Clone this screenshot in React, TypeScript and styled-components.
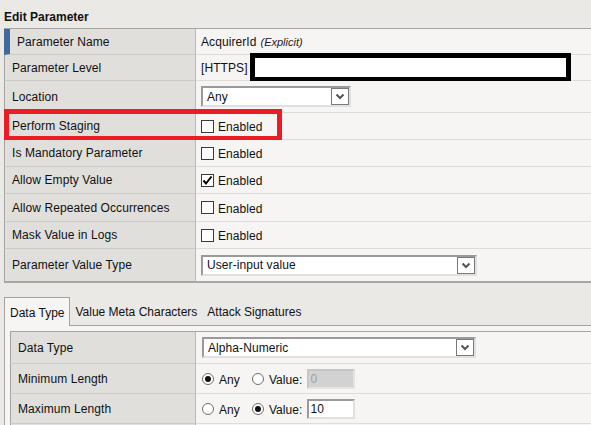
import React from "react";
import styled, { createGlobalStyle } from "styled-components";

const GlobalStyle = createGlobalStyle`
  html, body { margin: 0; padding: 0; }
  body {
    background: #eae9e6;
    font-family: "Liberation Sans", Arial, sans-serif;
    font-size: 12px;
    letter-spacing: 0.08px;
    color: #111;
    overflow: hidden;
  }
  * { box-sizing: border-box; }
`;

const Page = styled.div`
  padding-left: 4px;
  width: 591px;
  height: 425px;
  overflow: hidden;
`;

const Title = styled.h1`
  margin: 0;
  font-size: 12px;
  font-weight: bold;
  height: 28px;
  padding-top: 10px;
  line-height: 14px;
  color: #111;
  letter-spacing: 0;
`;

const Table = styled.div<{ $outer?: boolean }>`
  position: relative;
  border-top: 1px solid #a3a3a3;
  border-bottom: ${(p) => (p.$outer ? "2px solid #a6a6a6" : "none")};
`;

const Row = styled.div<{ $h: number }>`
  position: relative;
  display: flex;
  height: ${(p) => p.$h}px;
`;

const Label = styled.div<{ $w: number; $active?: boolean; $last?: boolean }>`
  width: ${(p) => p.$w}px;
  flex: none;
  display: flex;
  align-items: center;
  background: #e0dfdc;
  border-left: ${(p) => (p.$active ? "6px solid #3e6b9c" : "1px solid #a3a3a3")};
  border-right: 1px solid #b9b8b5;
  border-bottom: ${(p) => (p.$last ? "none" : "1px solid #cbcac7")};
  padding-left: 7px;
  white-space: nowrap;
`;

const Value = styled.div<{ $pad?: number; $last?: boolean }>`
  flex: 1;
  display: flex;
  align-items: center;
  background: #f6f5f3;
  border-bottom: ${(p) => (p.$last ? "none" : "1px solid #dddcd9")};
  padding-left: ${(p) => p.$pad ?? 5}px;
  white-space: nowrap;
`;

const Explicit = styled.i`
  font-size: 11px;
  color: #222;
  margin-left: 4px;
  letter-spacing: 0;
`;

const Redact = styled.div`
  position: absolute;
  top: -2px;
  left: 246px;
  width: 321px;
  height: 29px;
  border: 5px solid #000;
  background: #fff;
`;

const Highlight = styled.div`
  position: absolute;
  top: -4px;
  left: 0;
  width: 278px;
  height: 32px;
  border: 5px solid #ec1c24;
  pointer-events: none;
`;

const SelectBox = styled.div<{ $w: number }>`
  width: ${(p) => p.$w}px;
  height: 21px;
  display: flex;
  align-items: center;
  background: #fff;
  border-style: solid;
  border-width: 2px;
  border-color: #9a9a9a #e0e0e0 #e0e0e0 #9a9a9a;
`;

const SelectText = styled.span`
  flex: 1;
  padding-left: 4px;
  font-size: 12px;
`;

const ArrowBtn = styled.span`
  width: 18px;
  height: 17px;
  border: 1px solid #7a7a7a;
  background: #fff;
  display: flex;
  align-items: center;
  justify-content: center;
`;

const Box = styled.span`
  width: 13px;
  height: 13px;
  border: 1px solid #3a3a3a;
  background: #fff;
  display: inline-flex;
  align-items: center;
  justify-content: center;
  margin-right: 4px;
  flex: none;
`;

const Radio = styled.span<{ $on?: boolean }>`
  width: 12px;
  height: 12px;
  border-radius: 50%;
  border: 1px solid #6e6e6e;
  background: #fff;
  display: inline-flex;
  align-items: center;
  justify-content: center;
  margin-right: 5px;
  flex: none;
  &::after {
    content: "";
    width: 6px;
    height: 6px;
    border-radius: 50%;
    background: ${(p) => (p.$on ? "#111" : "transparent")};
  }
`;

const RadioText = styled.span<{ $gap?: number }>`
  margin-right: ${(p) => p.$gap ?? 0}px;
  padding-top: 2px;
`;

const CheckText = styled.span`
  padding-top: 2px;
`;

const LenInput = styled.input`
  width: 48px;
  height: 20px;
  margin: 0 0 0 4px;
  padding: 0 0 0 2px;
  font-family: "Liberation Sans", Arial, sans-serif;
  font-size: 12px;
  color: #111;
  background: #fff;
  border-style: solid;
  border-width: 2px;
  border-color: #9a9a9a #e0e0e0 #e0e0e0 #9a9a9a;
  outline: none;
  &:disabled {
    background: #d2d2d2;
    color: #a0a0a0;
    border-color: #c6c6c6 #e4e4e4 #e4e4e4 #c6c6c6;
  }
`;

const TabStrip = styled.div`
  display: flex;
  margin-top: 14px;
  height: 29px;
  border-bottom: 1px solid #a3a3a3;
  letter-spacing: 0;
`;

const Tab = styled.div<{ $active?: boolean }>`
  display: flex;
  align-items: center;
  padding: 1px 5px 0 5px;
  height: ${(p) => (p.$active ? 29 : 28)}px;
  background: ${(p) => (p.$active ? "#f6f5f3" : "transparent")};
  border: ${(p) => (p.$active ? "1px solid #a3a3a3" : "none")};
  border-bottom: none;
  margin-bottom: ${(p) => (p.$active ? -1 : 0)}px;
`;

const Panel = styled.div`
  background: #f6f5f3;
  border-left: 1px solid #a3a3a3;
  padding: 5px 0 0 5px;
  height: 100px;
  overflow: hidden;
`;

const Chevron = () => (
  <svg width="10" height="7" viewBox="0 0 10 7">
    <path d="M1.5 1.5 L5 5 L8.5 1.5" stroke="#555" strokeWidth="2" fill="none" />
  </svg>
);

const Select = ({ w, text }: { w: number; text: string }) => (
  <SelectBox $w={w}>
    <SelectText>{text}</SelectText>
    <ArrowBtn>
      <Chevron />
    </ArrowBtn>
  </SelectBox>
);

const Check = ({ on }: { on?: boolean }) => (
  <>
    <Box>
      {on && (
        <svg width="11" height="11" viewBox="0 0 11 11">
          <path d="M1.5 5.5 L4 8.5 L9.5 1.5" stroke="#000" strokeWidth="2" fill="none" />
        </svg>
      )}
    </Box>
    <CheckText>Enabled</CheckText>
  </>
);

const OUTER_W = 192;
const INNER_W = 186;

export default function App() {
  return (
    <Page>
      <GlobalStyle />
      <Title>Edit Parameter</Title>
      <Table $outer>
        <Row $h={26}>
          <Label $w={OUTER_W} $active>Parameter Name</Label>
          <Value>
            AcquirerId<Explicit>(Explicit)</Explicit>
          </Value>
        </Row>
        <Row $h={26}>
          <Label $w={OUTER_W}>Parameter Level</Label>
          <Value>[HTTPS]</Value>
          <Redact />
        </Row>
        <Row $h={32}>
          <Label $w={OUTER_W}>Location</Label>
          <Value>
            <Select w={150} text="Any" />
          </Value>
        </Row>
        <Row $h={27}>
          <Label $w={OUTER_W}>Perform Staging</Label>
          <Value>
            <Check />
          </Value>
          <Highlight />
        </Row>
        <Row $h={27}>
          <Label $w={OUTER_W}>Is Mandatory Parameter</Label>
          <Value>
            <Check />
          </Value>
        </Row>
        <Row $h={27}>
          <Label $w={OUTER_W}>Allow Empty Value</Label>
          <Value>
            <Check on />
          </Value>
        </Row>
        <Row $h={28}>
          <Label $w={OUTER_W}>Allow Repeated Occurrences</Label>
          <Value>
            <Check />
          </Value>
        </Row>
        <Row $h={27}>
          <Label $w={OUTER_W}>Mask Value in Logs</Label>
          <Value>
            <Check />
          </Value>
        </Row>
        <Row $h={32}>
          <Label $w={OUTER_W} $last>Parameter Value Type</Label>
          <Value $last>
            <Select w={276} text="User-input value" />
          </Value>
        </Row>
      </Table>

      <TabStrip>
        <Tab $active>Data Type</Tab>
        <Tab>Value Meta Characters</Tab>
        <Tab>Attack Signatures</Tab>
      </TabStrip>
      <Panel>
        <Table>
          <Row $h={32}>
            <Label $w={INNER_W}>Data Type</Label>
            <Value $pad={6}>
              <Select w={274} text="Alpha-Numeric" />
            </Value>
          </Row>
          <Row $h={30}>
            <Label $w={INNER_W}>Minimum Length</Label>
            <Value $pad={6}>
              <Radio $on />
              <RadioText $gap={12}>Any</RadioText>
              <Radio />
              <RadioText>Value:</RadioText>
              <LenInput disabled defaultValue="0" />
            </Value>
          </Row>
          <Row $h={30}>
            <Label $w={INNER_W}>Maximum Length</Label>
            <Value $pad={6}>
              <Radio />
              <RadioText $gap={12}>Any</RadioText>
              <Radio $on />
              <RadioText>Value:</RadioText>
              <LenInput defaultValue="10" />
            </Value>
          </Row>
          <Row $h={30}>
            <Label $w={INNER_W}>&nbsp;</Label>
            <Value $pad={6} />
          </Row>
        </Table>
      </Panel>
    </Page>
  );
}
